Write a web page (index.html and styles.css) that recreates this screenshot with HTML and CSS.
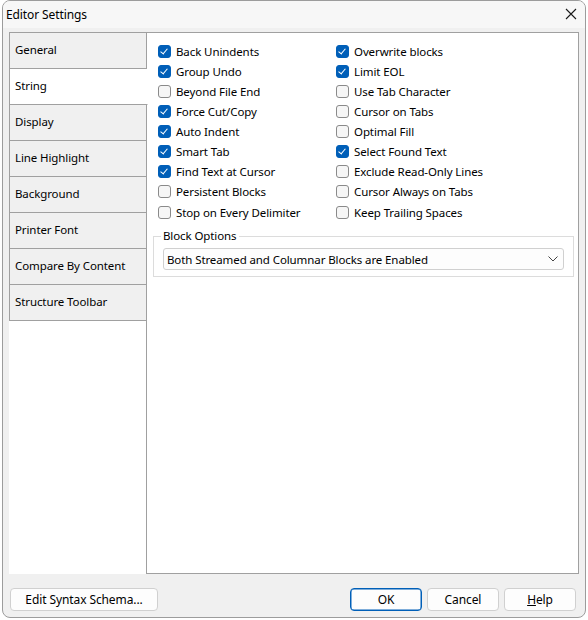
FILE: index.html
```html
<!DOCTYPE html>
<html>
<head>
<meta charset="utf-8">
<link rel="stylesheet" href="styles.css">
</head>
<body>
<div class="window">
  <div class="titlebar">
    <span class="title">Editor Settings</span>
    <svg class="close" width="12" height="12" viewBox="0 0 12 12"><path d="M1 1 L11 11 M11 1 L1 11" stroke="#1a1a1a" stroke-width="1.1" fill="none"/></svg>
  </div>
  <div class="client">
    <div class="main">
      <div class="tabs">
        <div class="tab">General</div>
        <div class="tab sel">String</div>
        <div class="tab">Display</div>
        <div class="tab">Line Highlight</div>
        <div class="tab">Background</div>
        <div class="tab">Printer Font</div>
        <div class="tab">Compare By Content</div>
        <div class="tab">Structure Toolbar</div>
      </div>
      <div class="page">
        <div class="checks">
          <div class="col">
            <div class="cb on"><span class="box"></span>Back Unindents</div>
            <div class="cb on"><span class="box"></span>Group Undo</div>
            <div class="cb"><span class="box"></span>Beyond File End</div>
            <div class="cb on"><span class="box"></span>Force Cut/Copy</div>
            <div class="cb on"><span class="box"></span>Auto Indent</div>
            <div class="cb on"><span class="box"></span>Smart Tab</div>
            <div class="cb on"><span class="box"></span>Find Text at Cursor</div>
            <div class="cb"><span class="box"></span>Persistent Blocks</div>
            <div class="cb last"><span class="box"></span>Stop on Every Delimiter</div>
          </div>
          <div class="col">
            <div class="cb on"><span class="box"></span>Overwrite blocks</div>
            <div class="cb on"><span class="box"></span>Limit EOL</div>
            <div class="cb"><span class="box"></span>Use Tab Character</div>
            <div class="cb"><span class="box"></span>Cursor on Tabs</div>
            <div class="cb"><span class="box"></span>Optimal Fill</div>
            <div class="cb on"><span class="box"></span>Select Found Text</div>
            <div class="cb"><span class="box"></span>Exclude Read-Only Lines</div>
            <div class="cb"><span class="box"></span>Cursor Always on Tabs</div>
            <div class="cb last"><span class="box"></span>Keep Trailing Spaces</div>
          </div>
        </div>
        <div class="group">
          <span class="legend">Block Options</span>
          <div class="combo">
            <span>Both Streamed and Columnar Blocks are Enabled</span>
            <svg width="10" height="6" viewBox="0 0 10 6"><path d="M0.5 0.5 L5 5 L9.5 0.5" stroke="#444" stroke-width="1" fill="none"/></svg>
          </div>
        </div>
      </div>
    </div>
    <div class="buttons">
      <div class="btn wide">Edit Syntax Schema...</div>
      <div class="spacer"></div>
      <div class="btn def">OK</div>
      <div class="btn">Cancel</div>
      <div class="btn"><u>H</u>elp</div>
    </div>
  </div>
</div>
</body>
</html>
```
FILE: styles.css
```css
html, body {
  margin: 0;
  padding: 0;
  background: #ffffff;
}
body {
  font-family: "Noto Sans", "Open Sans", sans-serif;
  font-size: 11.5px;
  letter-spacing: -0.1px;
  color: #000;
  width: 588px;
  height: 620px;
  overflow: hidden;
}
.window {
  margin-left: 2px;
  width: 582px;
  height: 616px;
  border: 1px solid #9c9c9c;
  border-radius: 8px;
  background: #f0f0f0;
  display: flex;
  flex-direction: column;
  overflow: hidden;
}
.titlebar {
  height: 27px;
  flex: none;
  background: #f7f7f7;
  display: flex;
  align-items: center;
  justify-content: space-between;
  padding: 0 8px 0 3px;
}
.title {
  font-size: 12px;
  line-height: 27px;
}
.close {
  display: block;
  margin-top: -1px;
}
.client {
  flex: 1;
  display: flex;
  flex-direction: column;
}
.main {
  display: flex;
  height: 542px;
  margin: 4px 6px 0 6px;
}
.tabs {
  width: 138px;
  flex: none;
  background: #ffffff;
  display: flex;
  flex-direction: column;
}
.tab {
  height: 35px;
  line-height: 34px;
  border: 1px solid #a0a0a0;
  border-top: none;
  background: #f0f0f0;
  padding-left: 5px;
  box-sizing: content-box;
}
.tab:first-child {
  border-top: 1px solid #a0a0a0;
}
.tab.sel {
  background: #ffffff;
  border-right-color: #ffffff;
  margin-right: -1px;
  position: relative;
  z-index: 2;
}
.page {
  flex: 1;
  background: #ffffff;
  border: 1px solid #a0a0a0;
  margin-left: -1px;
  padding: 8px 4px 0 5px;
  display: flex;
  flex-direction: column;
}
.checks {
  display: flex;
  padding-left: 6px;
}
.col {
  width: 178px;
  display: flex;
  flex-direction: column;
}
.cb {
  height: 20px;
  display: flex;
  align-items: center;
  white-space: nowrap;
}
.cb.last {
  margin-top: 1px;
}
.box {
  width: 11px;
  height: 11px;
  border: 1px solid #8a8a8a;
  border-radius: 3px;
  background: #f6f6f6;
  margin-right: 5px;
  flex: none;
  position: relative;
}
.cb.on .box {
  background: #005fb8;
  border-color: #005fb8;
}
.cb.on .box::after {
  content: "";
  position: absolute;
  left: 3px;
  top: 1px;
  width: 3px;
  height: 6px;
  border-right: 1.3px solid #fff;
  border-bottom: 1.3px solid #fff;
  transform: rotate(40deg);
}
.group {
  margin-top: 14px;
  margin-left: 1px;
  border: 1px solid #dcdcdc;
  padding: 11px 9px 6px 9px;
  position: relative;
}
.legend {
  position: absolute;
  left: 7px;
  top: -9px;
  background: #ffffff;
  padding: 0 2px;
  line-height: 16px;
}
.combo {
  height: 20px;
  border: 1px solid #d0d0d0;
  border-radius: 3px;
  background: #fdfdfd;
  display: flex;
  align-items: center;
  justify-content: space-between;
  padding: 0 5px 0 3px;
}
.buttons {
  display: flex;
  align-items: center;
  margin: 14px 9px 0 7px;
  gap: 5px;
  font-size: 12px;
}
.spacer {
  flex: 1;
}
.btn {
  width: 70px;
  height: 21px;
  border: 1px solid #d0d0d0;
  border-radius: 4px;
  background: #fdfdfd;
  display: flex;
  align-items: center;
  justify-content: center;
}
.btn.wide {
  width: 146px;
}
.btn.def {
  border-color: #005fb8;
  box-shadow: inset 0 0 0 0.5px #005fb8;
}
```
